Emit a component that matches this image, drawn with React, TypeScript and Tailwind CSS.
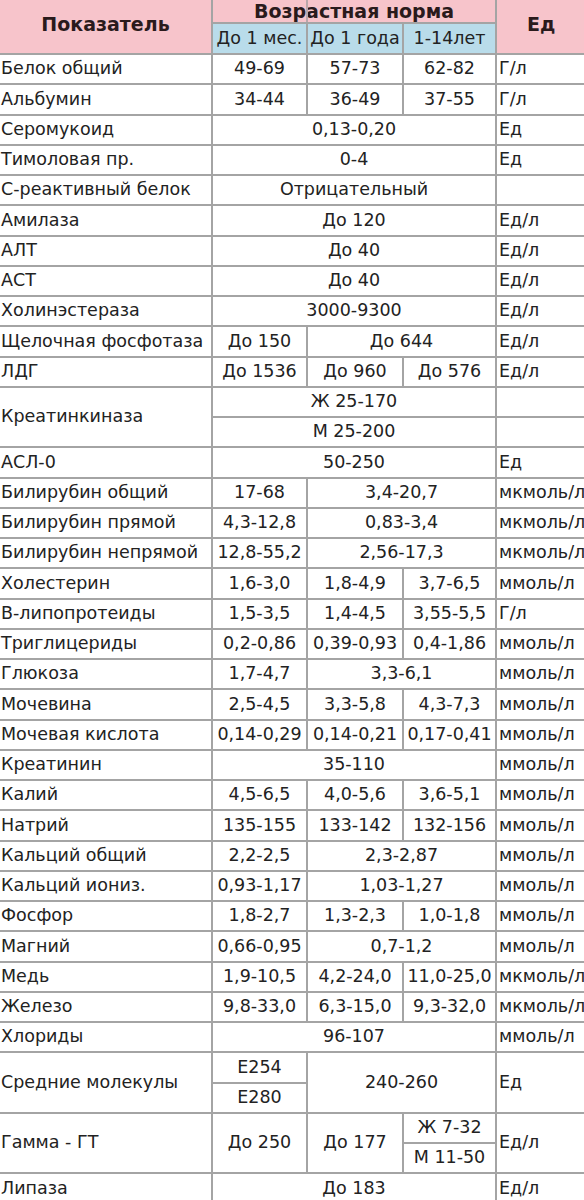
import React from "react"

const line = "border-2 border-[#a4a4a4]"
const td = `${line} px-0 text-center whitespace-nowrap`
const name = `${line} border-l-0 pl-[1px] pr-0 text-left whitespace-nowrap`
const unit = `${line} pl-[2px] pr-0 text-left whitespace-nowrap`
const rowH = "h-[30.25px]"

type Row = { n: string; v: string[]; span?: number[]; u: string }

const top: Row[] = [
  { n: "Белок общий", v: ["49-69", "57-73", "62-82"], u: "Г/л" },
  { n: "Альбумин", v: ["34-44", "36-49", "37-55"], u: "Г/л" },
  { n: "Серомукоид", v: ["0,13-0,20"], span: [3], u: "Ед" },
  { n: "Тимоловая пр.", v: ["0-4"], span: [3], u: "Ед" },
  { n: "С-реактивный белок", v: ["Отрицательный"], span: [3], u: "" },
  { n: "Амилаза", v: ["До 120"], span: [3], u: "Ед/л" },
  { n: "АЛТ", v: ["До 40"], span: [3], u: "Ед/л" },
  { n: "АСТ", v: ["До 40"], span: [3], u: "Ед/л" },
  { n: "Холинэстераза", v: ["3000-9300"], span: [3], u: "Ед/л" },
  { n: "Щелочная фосфотаза", v: ["До 150", "До 644"], span: [1, 2], u: "Ед/л" },
  { n: "ЛДГ", v: ["До 1536", "До 960", "До 576"], u: "Ед/л" },
]

const middle: Row[] = [
  { n: "АСЛ-0", v: ["50-250"], span: [3], u: "Ед" },
  { n: "Билирубин общий", v: ["17-68", "3,4-20,7"], span: [1, 2], u: "мкмоль/л" },
  { n: "Билирубин прямой", v: ["4,3-12,8", "0,83-3,4"], span: [1, 2], u: "мкмоль/л" },
  { n: "Билирубин непрямой", v: ["12,8-55,2", "2,56-17,3"], span: [1, 2], u: "мкмоль/л" },
  { n: "Холестерин", v: ["1,6-3,0", "1,8-4,9", "3,7-6,5"], u: "ммоль/л" },
  { n: "В-липопротеиды", v: ["1,5-3,5", "1,4-4,5", "3,55-5,5"], u: "Г/л" },
  { n: "Триглицериды", v: ["0,2-0,86", "0,39-0,93", "0,4-1,86"], u: "ммоль/л" },
  { n: "Глюкоза", v: ["1,7-4,7", "3,3-6,1"], span: [1, 2], u: "ммоль/л" },
  { n: "Мочевина", v: ["2,5-4,5", "3,3-5,8", "4,3-7,3"], u: "ммоль/л" },
  { n: "Мочевая кислота", v: ["0,14-0,29", "0,14-0,21", "0,17-0,41"], u: "ммоль/л" },
  { n: "Креатинин", v: ["35-110"], span: [3], u: "ммоль/л" },
  { n: "Калий", v: ["4,5-6,5", "4,0-5,6", "3,6-5,1"], u: "ммоль/л" },
  { n: "Натрий", v: ["135-155", "133-142", "132-156"], u: "ммоль/л" },
  { n: "Кальций общий", v: ["2,2-2,5", "2,3-2,87"], span: [1, 2], u: "ммоль/л" },
  { n: "Кальций иониз.", v: ["0,93-1,17", "1,03-1,27"], span: [1, 2], u: "ммоль/л" },
  { n: "Фосфор", v: ["1,8-2,7", "1,3-2,3", "1,0-1,8"], u: "ммоль/л" },
  { n: "Магний", v: ["0,66-0,95", "0,7-1,2"], span: [1, 2], u: "ммоль/л" },
  { n: "Медь", v: ["1,9-10,5", "4,2-24,0", "11,0-25,0"], u: "мкмоль/л" },
  { n: "Железо", v: ["9,8-33,0", "6,3-15,0", "9,3-32,0"], u: "мкмоль/л" },
  { n: "Хлориды", v: ["96-107"], span: [3], u: "ммоль/л" },
]

function Rows({ rows }: { rows: Row[] }) {
  return (
    <>
      {rows.map((r) => (
        <tr key={r.n} className={rowH}>
          <td className={name}>{r.n}</td>
          {r.v.map((v, i) => (
            <td key={i} colSpan={r.span ? r.span[i] : 1} className={td}>
              {v}
            </td>
          ))}
          <td className={unit}>{r.u}</td>
        </tr>
      ))}
    </>
  )
}

export default function App() {
  return (
    <div className="w-[584px] h-[1200px] overflow-hidden bg-white text-[#222] font-['DejaVu_Sans',sans-serif] text-[17.5px] leading-none">
      <table className="table-fixed border-collapse w-[600px]">
        <colgroup>
          <col className="w-[212px]" />
          <col className="w-[95px]" />
          <col className="w-[96px]" />
          <col className="w-[93px]" />
          <col className="w-[104px]" />
        </colgroup>
        <thead>
          <tr className="h-[23px]">
            <th rowSpan={2} className={`${line} border-l-0 border-t-0 bg-[#f7c4cb] text-[19px] font-bold text-[#2a1a1c] pb-[4px]`}>
              Показатель
            </th>
            <th colSpan={3} className={`${line} border-t-0 bg-[#f7c4cb] text-[19px] font-bold text-[#2a1a1c] relative`}>
              Возрастная норма
              <div className="absolute left-[93px] top-0 bottom-0 w-[2px] bg-[#b9a7ab]" />
            </th>
            <th rowSpan={2} className={`${line} border-t-0 bg-[#f7c4cb] text-[19px] font-bold text-[#2a1a1c] text-left pl-[30px] pb-[4px]`}>
              Ед
            </th>
          </tr>
          <tr className="h-[31px] bg-[#b9dcea]">
            <th className={`${td} font-normal`}>До 1 мес.</th>
            <th className={`${td} font-normal`}>До 1 года</th>
            <th className={`${td} font-normal`}>1-14лет</th>
          </tr>
        </thead>
        <tbody>
          <Rows rows={top} />
          <tr className={rowH}>
            <td rowSpan={2} className={name}>Креатинкиназа</td>
            <td colSpan={3} className={td}>Ж 25-170</td>
            <td className={unit}></td>
          </tr>
          <tr className={rowH}>
            <td colSpan={3} className={td}>М 25-200</td>
            <td className={unit}></td>
          </tr>
          <Rows rows={middle} />
          <tr className={rowH}>
            <td rowSpan={2} className={name}>Средние молекулы</td>
            <td className={td}>E254</td>
            <td rowSpan={2} colSpan={2} className={td}>240-260</td>
            <td rowSpan={2} className={unit}>Ед</td>
          </tr>
          <tr className={rowH}>
            <td className={td}>E280</td>
          </tr>
          <tr className={rowH}>
            <td rowSpan={2} className={name}>Гамма - ГТ</td>
            <td rowSpan={2} className={td}>До 250</td>
            <td rowSpan={2} className={td}>До 177</td>
            <td className={td}>Ж 7-32</td>
            <td rowSpan={2} className={unit}>Ед/л</td>
          </tr>
          <tr className={rowH}>
            <td className={td}>М 11-50</td>
          </tr>
          <tr className={rowH}>
            <td className={name}>Липаза</td>
            <td colSpan={3} className={td}>До 183</td>
            <td className={unit}>Ед/л</td>
          </tr>
        </tbody>
      </table>
    </div>
  )
}
